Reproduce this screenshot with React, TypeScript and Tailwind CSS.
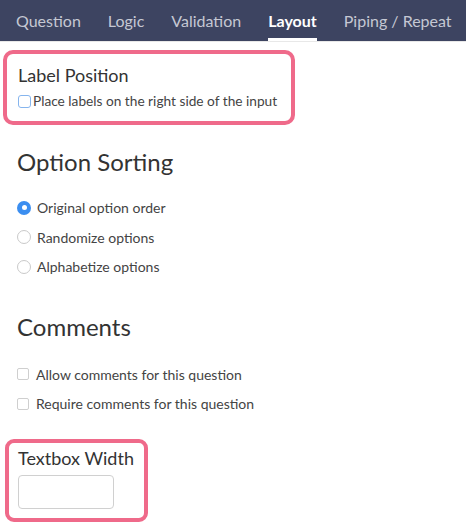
import React from 'react';

const tabs = ['Question', 'Logic', 'Validation', 'Layout', 'Piping / Repeat'];

const Radio = ({ checked, label }: { checked?: boolean; label: string }) => (
  <label className="h-[29.5px] flex items-center gap-[6px]">
    {checked ? (
      <span className="w-[14px] h-[14px] rounded-full bg-[#3b8ef0] flex items-center justify-center">
        <span className="w-[5px] h-[5px] rounded-full bg-white" />
      </span>
    ) : (
      <span className="w-[14px] h-[14px] rounded-full border border-[#c9c9c9] bg-white" />
    )}
    <span className="text-[14px] text-[#444]">{label}</span>
  </label>
);

const Check = ({ label }: { label: string }) => (
  <label className="h-[29.5px] flex items-center gap-[7px]">
    <span className="w-[12px] h-[12px] rounded-[2px] border border-[#cfcfcf] bg-white" />
    <span className="text-[14px] text-[#444]">{label}</span>
  </label>
);

export default function App() {
  return (
    <div className="w-[466px] h-[525px] bg-white overflow-hidden font-['Lato','Liberation_Sans',sans-serif]">
      {/* Tabs */}
      <div className="h-[42px] bg-[#3d4461] flex items-stretch gap-[27px] pl-[16px] border-b border-[#e8e8e8]">
        {tabs.map(t => (
          <div
            key={t}
            className={`flex items-center text-[16px] pt-[3px] ${
              t === 'Layout' ? 'text-white font-bold border-b-[3px] border-white' : 'text-[#c5c8d3] border-b-[3px] border-transparent'
            }`}
          >
            {t}
          </div>
        ))}
      </div>

      {/* Label Position */}
      <div className="mt-[8px] ml-[3px] w-[292px] h-[75px] border-[4px] border-[#ef6a8a] rounded-[10px] pl-[11px] pt-[10px]">
        <div className="text-[18px] leading-[22px] text-[#333]">Label Position</div>
        <label className="mt-[5px] flex items-center gap-[2px]">
          <span className="w-[13px] h-[13px] rounded-[3px] border-[1.5px] border-[#86b5ee] bg-white" />
          <span className="text-[13.7px] leading-[20px] text-[#444]">Place labels on the right side of the input</span>
        </label>
      </div>

      <div className="pl-[17px]">
        {/* Option Sorting */}
        <div className="mt-[22px] text-[24px] leading-[30px] text-[#333]">Option Sorting</div>
        <div className="mt-[16px] flex flex-col">
          <Radio checked label="Original option order" />
          <Radio label="Randomize options" />
          <Radio label="Alphabetize options" />
        </div>

        {/* Comments */}
        <div className="mt-[30px] text-[24px] leading-[30px] text-[#333]">Comments</div>
        <div className="mt-[18px] flex flex-col">
          <Check label="Allow comments for this question" />
          <Check label="Require comments for this question" />
        </div>
      </div>

      {/* Textbox Width */}
      <div className="mt-[20px] ml-[5px] w-[143px] h-[83px] border-[4px] border-[#ef6a8a] rounded-[9px] pl-[9px] pt-[4px]">
        <div className="text-[18px] leading-[22px] text-[#333]">Textbox Width</div>
        <input className="mt-[6px] w-[96px] h-[34px] border border-[#d0d0d0] rounded-[4px] bg-white outline-none" />
      </div>
    </div>
  );
}
